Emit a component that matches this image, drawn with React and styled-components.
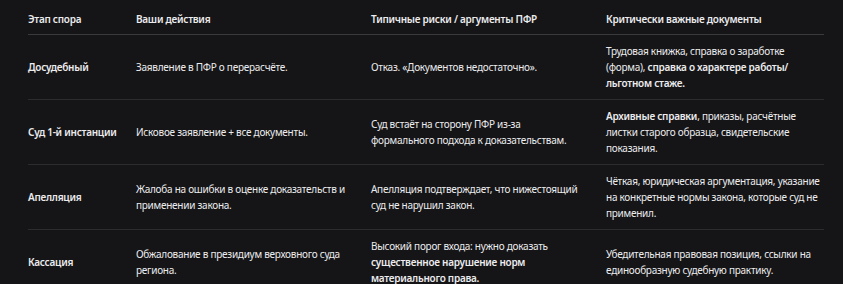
import React from "react";
import styled, { createGlobalStyle } from "styled-components";

const GlobalStyle = createGlobalStyle`
  body {
    margin: 0;
    background: #151517;
    font-family: "Noto Sans", "Open Sans", sans-serif;
  }
`;

const Wrapper = styled.div`
  padding: 3px 19px 0 28px;
  background: #151517;
  min-height: 284px;
  box-sizing: border-box;
`;

const Table = styled.table`
  width: 796px;
  border-collapse: collapse;
  table-layout: fixed;
  color: #ececee;
  font-size: 10px;
  letter-spacing: -0.26px;
  line-height: 16px;
`;

const Col = styled.col`
  width: ${({ w }) => w}px;
`;

const cellPad = `
  padding: 8px 20px 8px 0;
  &:first-child {
    padding-right: 8px;
  }
  &:last-child {
    padding-right: 0;
  }
`;

const Th = styled.th`
  ${cellPad}
  text-align: left;
  font-weight: 600;
  padding-bottom: 7px;
  border-bottom: 1px solid #3a3a3c;
`;

const Td = styled.td`
  ${cellPad}
  vertical-align: middle;
  font-weight: ${({ stage }) => (stage ? 600 : 400)};
  border-bottom: 1px solid #2c2c2e;
`;

const B = styled.strong`
  font-weight: 600;
`;

const rows = [
  {
    stage: "Досудебный",
    action: "Заявление в ПФР о перерасчёте.",
    risk: "Отказ. «Документов недостаточно».",
    docs: (
      <>
        Трудовая книжка, справка о заработке (форма),{" "}
        <B>справка о характере работы/ льготном стаже.</B>
      </>
    ),
  },
  {
    stage: "Суд 1-й инстанции",
    action: "Исковое заявление + все документы.",
    risk: "Суд встаёт на сторону ПФР из-за формального подхода к доказательствам.",
    docs: (
      <>
        <B>Архивные справки</B>, приказы, расчётные листки старого образца,
        свидетельские показания.
      </>
    ),
  },
  {
    stage: "Апелляция",
    action: "Жалоба на ошибки в оценке доказательств и применении закона.",
    risk: "Апелляция подтверждает, что нижестоящий суд не нарушил закон.",
    docs: "Чёткая, юридическая аргументация, указание на конкретные нормы закона, которые суд не применил.",
  },
  {
    stage: "Кассация",
    action: "Обжалование в президиум верховного суда региона.",
    risk: (
      <>
        Высокий порог входа: нужно доказать{" "}
        <B>существенное нарушение норм материального права.</B>
      </>
    ),
    docs: "Убедительная правовая позиция, ссылки на единообразную судебную практику.",
  },
];

export default function App() {
  return (
    <Wrapper>
      <GlobalStyle />
      <Table>
        <colgroup>
          <Col w={108} />
          <Col w={235} />
          <Col w={235} />
          <Col w={218} />
        </colgroup>
        <thead>
          <tr>
            <Th>Этап спора</Th>
            <Th>Ваши действия</Th>
            <Th>Типичные риски / аргументы ПФР</Th>
            <Th>Критически важные документы</Th>
          </tr>
        </thead>
        <tbody>
          {rows.map((r) => (
            <tr key={r.stage}>
              <Td stage>{r.stage}</Td>
              <Td>{r.action}</Td>
              <Td>{r.risk}</Td>
              <Td>{r.docs}</Td>
            </tr>
          ))}
        </tbody>
      </Table>
    </Wrapper>
  );
}
